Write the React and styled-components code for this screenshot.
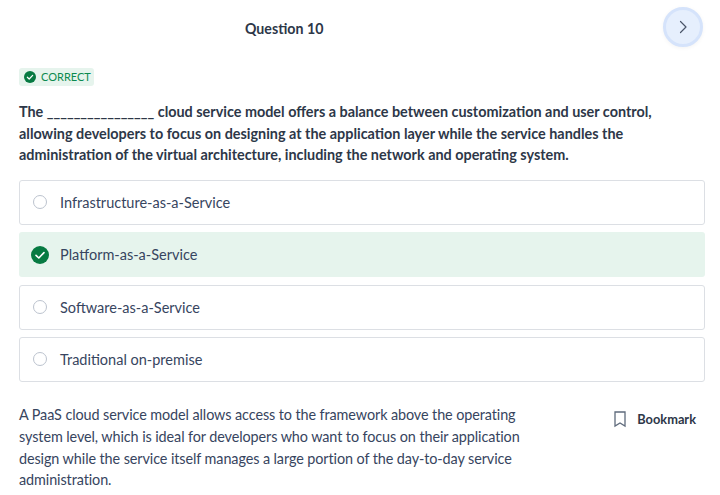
import React from "react";
import styled, { createGlobalStyle } from "styled-components";

const Global = createGlobalStyle`
  html, body { margin: 0; padding: 0; background: #fff; }
  body { font-family: Lato, "Liberation Sans", sans-serif; color: #2d3748; overflow: hidden; }
`;
const Page = styled.div`
  width: 720px; height: 495px; box-sizing: border-box; padding: 0 15px 0 19px; overflow: hidden;
`;
const Header = styled.header`
  height: 56px; display: flex; align-items: center; justify-content: space-between; padding-left: 226px; padding-right: 2px;
`;
const Title = styled.h1`
  margin: 1px 0 0; font-size: 14.2px; font-weight: 700; line-height: 20px; color: #2d3748;
`;
const NextButton = styled.button`
  width: 34px; height: 34px; padding: 0; margin: 0 0 2px; border: 3px solid #d5e3fb; border-radius: 50%; background: #e6effd;
  display: flex; align-items: center; justify-content: center; color: #4a5568; box-sizing: content-box;
  box-shadow: 0 1px 4px rgba(0,0,0,.05);
`;
const Badge = styled.div`
  margin-top: 12px; width: max-content; height: 18px; padding: 0 3px 0 5px; display: flex; align-items: center; gap: 5px;
  border-radius: 3px; background: #e6f4ed; color: #0b8a4f; font-size: 11px; line-height: 18px;
`;
const Question = styled.p`
  margin: 15px 0 0; padding: 0; font-size: 14.4px; line-height: 21.6px; font-weight: 700; color: #2d3748; width: 660px;
`;
const Options = styled.div`
  margin-top: 14px; display: flex; flex-direction: column; gap: 7.4px;
`;
const Option = styled.div`
  box-sizing: border-box; height: 45px; display: flex; align-items: center; gap: ${p => (p.$correct ? 11 : 13)}px; padding-left: ${p => (p.$correct ? 12 : 13)}px;
  border-radius: 3px; border: ${p => (p.$correct ? "none" : "1px solid #dcdfe4")}; background: ${p => (p.$correct ? "#e6f4ed" : "#fff")};
  font-size: 14.5px; color: #374560;
`;
const Radio = styled.span`
  box-sizing: border-box; width: 14px; height: 14px; border-radius: 50%; border: 1px solid #bcc3ce; flex: none;
`;
const Footer = styled.div`
  margin-top: 22.4px; display: flex; justify-content: space-between; align-items: flex-start; padding-right: 9px;
`;
const Explanation = styled.p`
  margin: 0; width: 505px; font-size: 14.4px; letter-spacing: -0.09px; line-height: 21.6px; color: #374560;
`;
const Bookmark = styled.div`
  display: flex; align-items: center; gap: 10px; font-size: 12.8px; font-weight: 700; color: #2d3748; line-height: 20px; margin-top: 4.6px;
`;

const CheckCircle = ({ size, stroke }) => (
  <svg width={size} height={size} viewBox="0 0 18 18" style={{ flex: "none" }}>
    <circle cx="9" cy="9" r="9" fill="#077a42" />
    <path d="M5 9.3l2.8 2.7L13 6.6" fill="none" stroke="#fff" strokeWidth={stroke} strokeLinecap="round" strokeLinejoin="round" />
  </svg>
);

const options = ["Infrastructure-as-a-Service", "Platform-as-a-Service", "Software-as-a-Service", "Traditional on-premise"];

export default function App() {
  return (
    <Page>
      <Global />
      <Header>
        <Title>Question 10</Title>
        <NextButton aria-label="Next">
          <svg width="14" height="14" viewBox="0 0 14 14" fill="none" stroke="currentColor" strokeWidth="1.2" strokeLinecap="round" strokeLinejoin="round">
            <path d="M4.5 1.5L10 7l-5.5 5.5" />
          </svg>
        </NextButton>
      </Header>
      <Badge><CheckCircle size={12} stroke={1.8} />CORRECT</Badge>
      <Question>
        The ________________ cloud service model offers a balance between customization and user control, allowing developers to focus on designing at the application layer while the service handles the administration of the virtual architecture, including the network and operating system.
      </Question>
      <Options>
        {options.map((o, i) => (
          <Option key={o} $correct={i === 1}>
            {i === 1 ? <CheckCircle size={18} stroke={1.6} /> : <Radio />}
            {o}
          </Option>
        ))}
      </Options>
      <Footer>
        <Explanation>
          A PaaS cloud service model allows access to the framework above the operating system level, which is ideal for developers who want to focus on their application design while the service itself manages a large portion of the day-to-day service administration.
        </Explanation>
        <Bookmark>
          <svg width="14" height="18" viewBox="0 0 14 18" fill="none" stroke="#5f6b7c" strokeWidth="1.3">
            <path d="M2 2h10v14l-5-3-5 3z" />
          </svg>
          Bookmark
        </Bookmark>
      </Footer>
    </Page>
  );
}
